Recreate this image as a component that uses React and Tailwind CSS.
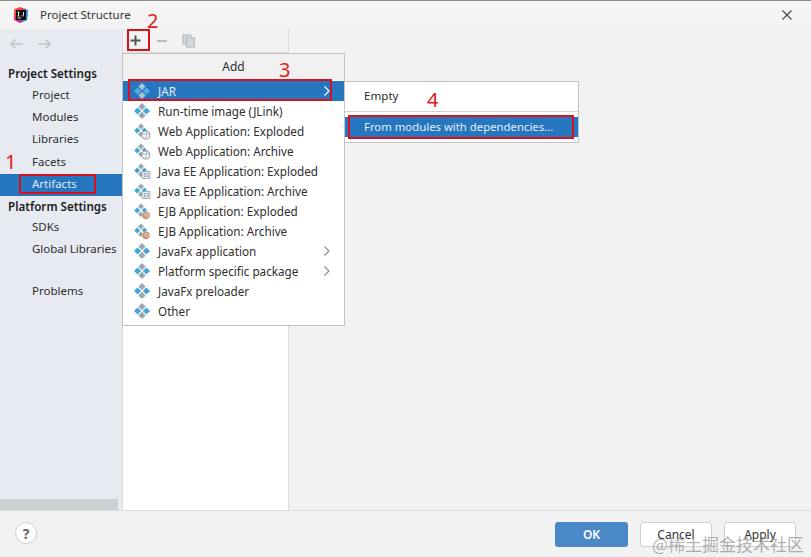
import React from "react";

const font = { fontFamily: '"Noto Sans", sans-serif' };

function Art({ kind, sel }) {
  const d = (cx, cy, c, r = 3.6) => (
    <polygon points={`${cx},${cy - r} ${cx + r},${cy} ${cx},${cy + r} ${cx - r},${cy}`} fill={c} />
  );
  const blue = sel ? "#4fb0e0" : "#40a8d8";
  const gray = sel ? "#a9c3d6" : "#9aa7b0";
  if (kind === "plain") {
    return (
      <svg width="16" height="16" viewBox="0 0 16 16">
        {d(8, 3.6, gray)}
        {d(3.6, 8, blue)}
        {d(12.4, 8, blue)}
        {d(8, 12.4, gray)}
      </svg>
    );
  }
  return (
    <svg width="17" height="17" viewBox="0 0 17 17">
      {d(7, 3.4, gray, 3)}
      {d(3.2, 7.6, blue, 3)}
      {d(10.4, 7.2, blue, 2.6)}
      {d(6.8, 11.2, gray, 2.8)}
      {kind === "web" && (
        <g>
          <circle cx="11.8" cy="12" r="4" fill="#fff" stroke="#8e979e" strokeWidth="1.1" />
          <path d="M8.5 11h3l1 2-1.5 2M13 8.6l-.6 2 2.6.8" fill="none" stroke="#8e979e" strokeWidth="0.8" />
        </g>
      )}
      {kind === "ee" && (
        <g>
          <rect x="8" y="8.5" width="8" height="7" fill="#dfe5ea" stroke="#9aa7b0" strokeWidth="0.8" />
          <path d="M10 10.5h1.6M10 12h1.6M10 13.5h1.6M13 10.5h1.6M13 12h1.6M13 13.5h1.6" stroke="#7f8b94" strokeWidth="0.8" />
        </g>
      )}
      {kind === "ejb" && (
        <g>
          <circle cx="12" cy="12.4" r="3.8" fill="#c99779" />
          <path d="M9.6 10.6l4.6 4M11.6 9.4l3.6 3.4" stroke="#f4e6dc" strokeWidth="0.8" />
        </g>
      )}
    </svg>
  );
}

function Chevron({ color }) {
  return (
    <svg width="8" height="12" viewBox="0 0 8 12" fill="none" stroke={color} strokeWidth="1.2">
      <path d="M1.5 1.5 6 6l-4.5 4.5" />
    </svg>
  );
}

const items = [
  ["JAR", "plain", true, true],
  ["Run-time image (JLink)", "plain"],
  ["Web Application: Exploded", "web"],
  ["Web Application: Archive", "web"],
  ["Java EE Application: Exploded", "ee"],
  ["Java EE Application: Archive", "ee"],
  ["EJB Application: Exploded", "ejb"],
  ["EJB Application: Archive", "ejb"],
  ["JavaFx application", "plain", true],
  ["Platform specific package", "plain", true],
  ["JavaFx preloader", "plain"],
  ["Other", "plain"],
];

function NavItem({ children, sel }) {
  return (
    <div className={`h-[22.4px] pl-8 pb-[2px] flex items-center text-[11.5px] ${sel ? "bg-[#2675bf] text-[#dfeaf5]" : "text-[#2e2e2e]"}`}>
      {children}
    </div>
  );
}

function NavHead({ children, className = "" }) {
  return <div className={`pl-2 text-[11.6px] font-semibold text-[#1c1c1c] ${className}`}>{children}</div>;
}

function RedBox({ className }) {
  return <div className={`absolute border-2 border-[#d9111c] ${className}`} />;
}

function Num({ className, children }) {
  return <div className={`absolute text-[#e01b1b] text-[20px] leading-none ${className}`}>{children}</div>;
}

export default function App() {
  return (
    <div className="relative w-[811px] h-[557px] overflow-hidden bg-[#f2f2f2] flex flex-col" style={font}>
      <div className="h-[29px] shrink-0 border-t border-[#8c8c8c] bg-[#f4f4f4] flex items-center pl-[13px] pr-[18px]">
        <svg width="16" height="16" viewBox="0 0 16 16">
          <defs>
            <linearGradient id="lg" x1="0" y1="0" x2="1" y2="1">
              <stop offset="0" stopColor="#ff7a1a" />
              <stop offset="0.45" stopColor="#f0246e" />
              <stop offset="1" stopColor="#6a3df0" />
            </linearGradient>
          </defs>
          <path d="M1 2 7 0l8 3-1 10-7 3-6-3z" fill="url(#lg)" />
          <path d="M11 1l4 3-1 9-5 2z" fill="#1f9cf0" />
          <rect x="3" y="3" width="10" height="10" fill="#0c0c0c" />
          <path d="M4.5 5h2M5.5 5v4M4.5 9h2M10.5 5v3.4c0 .8-1.4.9-2 .2M4.5 11h3.5" stroke="#fff" strokeWidth="0.9" fill="none" />
        </svg>
        <div className="ml-[11px] text-[11.5px] text-[#333333]">Project Structure</div>
        <svg className="ml-auto" width="12" height="12" viewBox="0 0 12 12" stroke="#444" strokeWidth="1.1">
          <path d="M1.5 1.5l9 9M10.5 1.5l-9 9" />
        </svg>
      </div>

      <div className="flex flex-1 min-h-0 border-b border-[#dcdcdc]">
        <div className="w-[122px] shrink-0 bg-[#e7ebf1] flex flex-col relative">
          <div className="h-[30px] pl-[9px] flex items-center gap-[15px] text-[#c0c5c9]">
            <svg width="14" height="12" viewBox="0 0 14 12" fill="none" stroke="currentColor" strokeWidth="1.6">
              <path d="M14 6H2M6.5 1.5 2 6l4.5 4.5" />
            </svg>
            <svg width="14" height="12" viewBox="0 0 14 12" fill="none" stroke="currentColor" strokeWidth="1.6">
              <path d="M0 6h12M7.5 1.5 12 6l-4.5 4.5" />
            </svg>
          </div>
          <NavHead className="mt-[6px] h-[18px] leading-[18px]">Project Settings</NavHead>
          <div className="mt-[1px]">
            <NavItem>Project</NavItem>
            <NavItem>Modules</NavItem>
            <NavItem>Libraries</NavItem>
            <NavItem>Facets</NavItem>
            <NavItem sel>Artifacts</NavItem>
          </div>
          <NavHead className="h-[20px] leading-[22px]">Platform Settings</NavHead>
          <NavItem>SDKs</NavItem>
          <NavItem>Global Libraries</NavItem>
          <div className="h-[20px]" />
          <NavItem>Problems</NavItem>
          <div className="mt-auto h-[11px] w-[118px] bg-[#cdd1d3]" />
        </div>

        <div className="w-[167px] shrink-0 flex flex-col border-l border-r border-[#dcdcdc]">
          <div className="h-[24px] shrink-0 bg-[#f2f2f2] border-b border-[#dcdcdc] flex items-center pl-[6px] gap-[14px]">
            <svg width="13" height="13" viewBox="0 0 13 13" stroke="#555" strokeWidth="2">
              <path d="M6.5 1.5v10M1.5 6.500h10" />
            </svg>
            <svg width="12" height="14" viewBox="0 0 12 14" stroke="#b8bcbf" strokeWidth="2">
              <path d="M1 7h10" />
            </svg>
            <svg width="14" height="14" viewBox="0 0 14 14" fill="#d4d7d9" stroke="#b8bcbf" strokeWidth="1.2">
              <rect x="1" y="1" width="8" height="9" />
              <rect x="4.5" y="4" width="8" height="9" />
            </svg>
          </div>
          <div className="flex-1 bg-white" />
        </div>

        <div className="flex-1" />
      </div>

      <div className="h-[46px] shrink-0 bg-[#f2f2f2] flex items-start pt-[11px] pr-[15px] pl-[15px]">
        <div className="w-[22px] h-[22px] rounded-full bg-white border border-[#cfcfcf] flex items-center justify-center text-[14px] font-bold text-[#666666]">
          ?
        </div>
        <div className="ml-auto h-[25px] w-[73px] rounded-[3px] bg-[#4a88c7] text-white text-[12px] font-semibold flex items-center justify-center">
          OK
        </div>
        <div className="ml-[12px] h-[25px] w-[72px] rounded-[3px] bg-white border border-[#cfcfcf] text-[#333333] text-[12px] flex items-center justify-center">
          Cancel
        </div>
        <div className="ml-[12px] h-[25px] w-[72px] rounded-[3px] bg-white border border-[#cfcfcf] text-[#333333] text-[12px] flex items-center justify-center">
          Apply
        </div>
      </div>

      {/* Add popup */}
      <div className="absolute left-[122px] top-[53px] w-[223px] h-[273px] bg-white border border-[#c4c4c4]">
        <div className="h-[26px] bg-[#f0f0f0] flex items-center justify-center text-[12px] text-[#2e2e2e]">Add</div>
        <div className="pt-[1px]">
          {items.map(([label, kind, arrow, sel]) => (
            <div
              key={label}
              className={`h-[20px] flex items-center pl-[11px] pr-[13px] text-[11.7px] ${sel ? "bg-[#2675bf] text-[#e3edf7]" : "text-[#2e2e2e]"}`}
            >
              <span className="w-[24px] shrink-0 flex items-center">
                <Art kind={kind} sel={sel} />
              </span>
              <span className="pt-[2px]">{label}</span>
              {arrow && (
                <span className="ml-auto flex">
                  <Chevron color={sel ? "#ffffff" : "#8f8f8f"} />
                </span>
              )}
            </div>
          ))}
        </div>
      </div>

      {/* JAR submenu */}
      <div className="absolute left-[344px] top-[81px] w-[235px] h-[62px] bg-white border border-[#c4c4c4] flex flex-col">
        <div className="h-[29px] pl-[19px] pb-[2px] flex items-center text-[11.6px] text-[#2e2e2e]">Empty</div>
        <div className="h-px bg-[#d4d4d4]" />
        <div className="mt-[5px] h-[20px] pl-[19px] bg-[#2675bf] text-[#e3edf7] text-[11.35px] flex items-center">
          From modules with dependencies...
        </div>
      </div>

      {/* annotations */}
      <RedBox className="left-[19px] top-[174px] w-[77px] h-[20px]" />
      <RedBox className="left-[127px] top-[29px] w-[23px] h-[22px]" />
      <RedBox className="left-[128px] top-[79px] w-[204px] h-[22px]" />
      <RedBox className="left-[348px] top-[115px] w-[226px] h-[24px]" />
      <Num className="left-[5px] top-[152px]">1</Num>
      <Num className="left-[147px] top-[11px]">2</Num>
      <Num className="left-[279px] top-[60px]">3</Num>
      <Num className="left-[427px] top-[90px]">4</Num>

      {/* watermark */}
      <div
        className="absolute left-[652px] top-[535px] text-[17px] leading-none text-[#8f8f8f]/70 whitespace-nowrap"
        style={{ fontFamily: '"Noto Sans CJK SC", sans-serif' }}
      >
        @稀土掘金技术社区
      </div>
    </div>
  );
}
